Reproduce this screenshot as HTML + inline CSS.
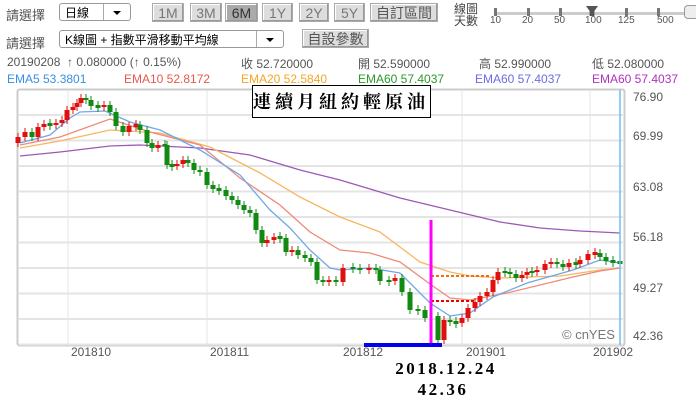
<!DOCTYPE html>
<html><head><meta charset="utf-8"><style>
body{margin:0;width:696px;height:403px;background:#fff;position:relative;overflow:hidden;font-family:"Liberation Sans","Noto Sans CJK TC",sans-serif;font-size:12px;color:#555}
.a{position:absolute;white-space:nowrap}
.sel{position:absolute;border:1px solid #999;border-radius:3px;background:#fff;height:18px;line-height:18px;color:#000;font-size:12px;padding-left:5px;box-sizing:border-box}
.sel .ar{position:absolute;right:0;top:0;width:26px;height:16px;border-left:1px solid #aaa}
.sel .ar:after{content:"";position:absolute;left:9px;top:7px;border:4px solid transparent;border-top:4px solid #000}
.btn{position:absolute;top:3px;height:19px;line-height:19px;background:#ddd;border:1px solid #aaa;box-shadow:inset -1px -1px 0 #999,inset 1px 1px 0 #fff;color:#777;font-size:14px;text-align:center;box-sizing:border-box}
</style></head><body>
<div class="a" style="left:6px;top:5px;font-size:13px">請選擇</div>
<div class="sel" style="left:59px;top:3px;width:72px">日線<span class="ar"></span></div>
<div class="btn" style="left:152px;width:32px">1M</div>
<div class="btn" style="left:190px;width:32px">3M</div>
<div class="btn" style="left:225px;width:33px;background:#aaa;color:#333">6M</div>
<div class="btn" style="left:262px;width:31px">1Y</div>
<div class="btn" style="left:299px;width:30px">2Y</div>
<div class="btn" style="left:334px;width:31px">5Y</div>
<div class="btn" style="left:370px;width:68px;color:#555">自訂區間</div>
<div class="a" style="left:454px;top:3px;font-size:12px;line-height:12px;color:#444">線圖<br>天數</div>
<div class="a" style="left:494px;top:12px;width:200px;height:3px;background:#ccc"></div>
<div class="a" style="left:494px;top:8px;width:3px;height:8px;background:#777"></div>
<div class="a" style="left:527px;top:8px;width:3px;height:8px;background:#777"></div>
<div class="a" style="left:559px;top:8px;width:3px;height:8px;background:#777"></div>
<div class="a" style="left:625px;top:8px;width:3px;height:8px;background:#777"></div>
<div class="a" style="left:657px;top:8px;width:3px;height:8px;background:#777"></div>
<div class="a" style="left:586px;top:6px;width:12px;height:10px;background:#555;clip-path:polygon(0 0,100% 0,70% 50%,70% 100%,30% 100%,30% 50%)"></div>
<div class="a" style="left:490px;top:15px;font-size:10px;color:#555">10</div>
<div class="a" style="left:522px;top:15px;font-size:10px;color:#555">20</div>
<div class="a" style="left:554px;top:15px;font-size:10px;color:#555">50</div>
<div class="a" style="left:585px;top:15px;font-size:10px;color:#555">100</div>
<div class="a" style="left:618px;top:15px;font-size:10px;color:#555">125</div>
<div class="a" style="left:657px;top:15px;font-size:10px;color:#555">500</div>
<div class="a" style="left:684px;top:5px;width:14px;height:12px;border:1px solid #999;border-radius:4px;background:#eee"></div>

<div class="a" style="left:6px;top:33px;font-size:13px">請選擇</div>
<div class="sel" style="left:59px;top:30px;width:225px">K線圖 + 指數平滑移動平均線<span class="ar"></span></div>
<div class="btn" style="left:302px;top:29px;width:67px;color:#555">自設參數</div>

<div class="a" style="left:7px;top:55px;color:#555">20190208 &nbsp;↑ 0.080000 (↑ 0.15%)</div>
<div class="a" style="left:241px;top:55px">收 52.720000</div>
<div class="a" style="left:358px;top:55px">開 52.590000</div>
<div class="a" style="left:479px;top:55px">高 52.990000</div>
<div class="a" style="left:592px;top:55px">低 52.080000</div>
<div class="a" style="left:7px;top:72px;color:#3a8ee6">EMA5 53.3801</div>
<div class="a" style="left:124px;top:72px;color:#e8584a">EMA10 52.8172</div>
<div class="a" style="left:241px;top:72px;color:#f5a623">EMA20 52.5840</div>
<div class="a" style="left:358px;top:72px;color:#2a9a2a">EMA60 57.4037</div>
<div class="a" style="left:475px;top:72px;color:#6b6be0">EMA60 57.4037</div>
<div class="a" style="left:592px;top:72px;color:#b030c0">EMA60 57.4037</div>

<svg class="a" style="left:0;top:0" width="696" height="403" id="c">
<rect x="17.5" y="89.5" width="607" height="256" fill="none" stroke="#ccc" stroke-width="2" rx="2"/>
<g stroke="#e4e4e4" stroke-width="2" id="grid"></g>
<g stroke="#e4e4e4" stroke-width="1">
<line x1="68" y1="90" x2="68" y2="345"/><line x1="207" y1="90" x2="207" y2="345"/><line x1="462" y1="90" x2="462" y2="345"/><line x1="590" y1="90" x2="590" y2="345"/></g>
<g fill="none" stroke-width="1.3">
<polyline stroke="#9b59b6" points="20,156 60,152 110,146 140,145 200,148 250,155 300,170 340,180 400,198 450,210 500,222 540,228 580,231 620,233"/>
<polyline stroke="#f7b660" points="20,148 60,141 110,130 160,133 210,147 260,173 300,197 340,217 380,232 420,262 450,272 470,276 500,278 560,276 600,270 620,268"/>
<polyline stroke="#ee8a78" points="20,145 60,137 110,119 150,132 200,145 240,178 280,205 310,232 340,250 370,253 400,262 430,284 450,298 470,300 507,293 573,277 600,271 620,268"/>
<polyline stroke="#6fa8e8" points="20,143 50,135 70,118 80,112 105,111 130,122 160,130 200,150 240,175 270,210 290,228 310,250 330,268 340,270 370,268 400,273 430,303 450,316 470,313 493,297 527,283 573,270 600,260 620,263"/>
</g>
<g id="k"></g>
<line x1="431" y1="301" x2="476" y2="301" stroke="#e00" stroke-width="2" stroke-dasharray="3,2"/>
<line x1="431" y1="276" x2="490" y2="276" stroke="#f07010" stroke-width="2" stroke-dasharray="3,2"/>
<rect x="429.5" y="220" width="3" height="126" fill="#ff00ff"/>
<rect x="364" y="343" width="78" height="4" fill="#0000ee"/>
<line x1="620" y1="90" x2="620" y2="345" stroke="#6cc0f0" stroke-width="1.5"/>
<text x="562" y="339" font-size="13" fill="#777" font-family="Liberation Sans">© cnYES</text>
<g font-size="12" fill="#555" font-family="Liberation Sans">
<text x="633" y="101">76.90</text><text x="633" y="140">69.99</text><text x="633" y="191">63.08</text><text x="633" y="241">56.18</text><text x="633" y="292">49.27</text><text x="633" y="340">42.36</text>
<text x="71" y="356">201810</text><text x="210" y="356">201811</text><text x="343" y="356">201812</text><text x="466" y="356">201901</text><text x="593" y="356">201902</text>
</g>
<rect x="252.5" y="85.5" width="178" height="32" fill="#fff" stroke="#000"/>
<text x="341" y="108" text-anchor="middle" font-size="18" font-weight="bold" fill="#000" font-family="'Noto Serif CJK SC',serif" letter-spacing="4">連續月紐約輕原油</text>
<text x="446" y="374" text-anchor="middle" font-size="17" font-weight="bold" fill="#000" font-family="'Liberation Serif',serif" letter-spacing="2.5">2018.12.24</text>
<text x="443" y="395" text-anchor="middle" font-size="17" font-weight="bold" fill="#000" font-family="'Liberation Serif',serif" letter-spacing="2.5">42.36</text>
</svg>
<script>
var g=document.getElementById('grid'),s='';
for(var y=115;y<345;y+=25.5)s+='<line x1="19" y1="'+y+'" x2="623" y2="'+y+'"/>';
g.innerHTML=s;
var d=[[18,137],[25,132],[32,137],[38,127],[44,124],[50,125],[56,123],[62,120],[67,110],[73,107],[77,103],[81,98],[86,100],[91,106],[98,107],[104,105],[110,112],[116,126],[123,132],[129,126],[136,125],[140,130],[147,143],[152,148],[158,145],[165,145],[167,165],[172,166],[177,164],[183,160],[188,163],[194,170],[200,172],[207,185],[213,189],[219,190],[226,196],[232,200],[238,205],[244,210],[250,213],[256,230],[262,243],[267,240],[274,237],[280,238],[286,252],[292,250],[298,255],[305,258],[311,262],[317,280],[323,282],[329,280],[336,282],[343,268],[353,268],[360,270],[369,268],[376,270],[380,281],[389,281],[395,278],[402,292],[410,310],[418,310],[425,318],[438,340],[444,320],[450,322],[456,323],[462,318],[468,308],[475,302],[480,296],[487,292],[493,280],[498,272],[505,272],[510,274],[516,278],[522,275],[527,272],[532,272],[537,270],[545,264],[551,262],[557,264],[563,267],[569,263],[576,264],[580,260],[588,254],[595,253],[600,257],[606,261],[613,262],[620,263]];
var o='',p=140;
d.forEach(function(c,i){var x=c[0],y=c[1],op=i==0?143:p;if(x==438)op=316;var up=y<op,col=up?'#e01010':'#108a10';var t=Math.min(y,op),b=Math.max(y,op);if(b-t<2){t-=1;b+=1;}
o+='<line x1="'+x+'" x2="'+x+'" y1="'+(t-4)+'" y2="'+(b+4)+'" stroke="'+col+'" stroke-width="1"/><rect x="'+(x-2.5)+'" y="'+t+'" width="5" height="'+(b-t)+'" fill="'+col+'"/>';p=y;});
document.getElementById('k').innerHTML=o;
</script>
</body></html>
